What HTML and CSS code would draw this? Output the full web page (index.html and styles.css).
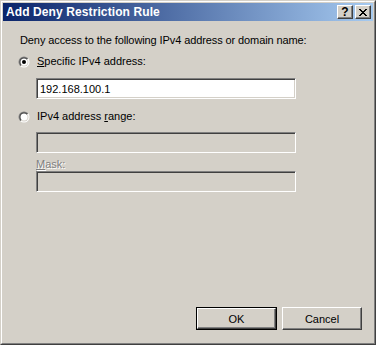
FILE: index.html
```html
<!DOCTYPE html>
<html lang="en">
  <head>
    <meta charset="UTF-8" />
    <title>Add Deny Restriction Rule</title>
    <link rel="stylesheet" href="styles.css">
  </head>
  <body>
    <div class="window">
      <div class="frame">
        <div class="titlebar">
          <span class="title">Add Deny Restriction Rule</span>
          <div class="capbtns">
            <button class="capbtn help">?</button>
            <button class="capbtn close">
              <svg width="8" height="7" viewBox="0 0 8 7">
                <path d="M0 0h2v1h1v1h2v-1h1v-1h2v1h-1v1h-1v1h-1v1h1v1h1v1h1v1h-2v-1h-1v-1h-2v1h-1v1h-2v-1h1v-1h1v-1h1v-1h-1v-1h-1v-1h-1z" fill="#000"/>
              </svg>
            </button>
          </div>
        </div>

        <div class="content">
          <div class="desc">Deny access to the following IPv4 address or domain name:</div>

          <!-- specific address -->
          <div class="radio-row first">
            <svg class="radio" width="12" height="12" viewBox="0 0 12 12">
              <defs>
                <linearGradient id="outer" x1="0" y1="0" x2="1" y2="1">
                  <stop offset="0.5" stop-color="#808080"/>
                  <stop offset="0.5" stop-color="#ffffff"/>
                </linearGradient>
                <linearGradient id="inner" x1="0" y1="0" x2="1" y2="1">
                  <stop offset="0.5" stop-color="#404040"/>
                  <stop offset="0.5" stop-color="#d4d0c8"/>
                </linearGradient>
              </defs>
              <circle cx="6" cy="6" r="5.5" fill="url(#outer)"/>
              <circle cx="6" cy="6" r="4.5" fill="url(#inner)"/>
              <circle cx="6" cy="6" r="3.5" fill="#fff"/>
              <circle cx="6" cy="6" r="2" fill="#000"/>
            </svg>
            <span class="label"><u>S</u>pecific IPv4 address:</span>
          </div>
          <div class="field first-field">
            <input class="textbox" type="text" value="192.168.100.1" />
          </div>

          <!-- range -->
          <div class="radio-row second">
            <svg class="radio" width="12" height="12" viewBox="0 0 12 12">
              <circle cx="6" cy="6" r="5.5" fill="url(#outer)"/>
              <circle cx="6" cy="6" r="4.5" fill="url(#inner)"/>
              <circle cx="6" cy="6" r="3.5" fill="#fff"/>
            </svg>
            <span class="label">IPv4 address <u>r</u>ange:</span>
          </div>
          <div class="field range-field">
            <input class="textbox disabled" type="text" disabled />
          </div>
          <div class="mask-label"><u>M</u>ask:</div>
          <div class="field mask-field">
            <input class="textbox disabled" type="text" disabled />
          </div>
        </div>

        <div class="buttons">
          <div class="default-ring"><button class="btn">OK</button></div>
          <button class="btn">Cancel</button>
        </div>
      </div>
    </div>
  </body>
</html>
```

FILE: styles.css
```css
body {
  margin: 0;
  background: #d4d0c8;
  font-family: "Liberation Sans", Arial, sans-serif;
  font-size: 11px;
}

.window {
  width: 376px;
  height: 345px;
  box-sizing: border-box;
  border: 1px solid;
  border-color: #d4d0c8 #404040 #404040 #d4d0c8;
  background: #d4d0c8;
}

.frame {
  height: 100%;
  box-sizing: border-box;
  border: 1px solid;
  border-color: #ffffff #808080 #808080 #ffffff;
  padding: 1px;
  display: flex;
  flex-direction: column;
}

.titlebar {
  height: 18px;
  display: flex;
  align-items: center;
  justify-content: space-between;
  background: linear-gradient(to right, #0a246a, #a6caf0);
}

.title {
  color: #fff;
  font-weight: bold;
  font-size: 12px;
  padding-left: 3px;
  letter-spacing: 0.1px;
}

.capbtns {
  display: flex;
  gap: 2px;
  padding-right: 2px;
}

.capbtn {
  width: 16px;
  height: 14px;
  padding: 0;
  margin: 0;
  background: #d4d0c8;
  border: 1px solid;
  border-color: #ffffff #404040 #404040 #ffffff;
  box-shadow: inset -1px -1px 0 #808080;
  display: flex;
  align-items: center;
  justify-content: center;
  font-family: "Liberation Sans", Arial, sans-serif;
  font-weight: bold;
  font-size: 12px;
  line-height: 12px;
  color: #000;
}

.close svg {
  display: block;
  margin-left: -1px;
}

.content {
  flex: 1;
  padding-left: 15px;
}

.desc {
  margin-top: 13px;
  padding-left: 2px;
  line-height: 13px;
  letter-spacing: -0.1px;
}

.radio-row {
  display: flex;
  align-items: center;
  height: 13px;
}

.radio-row.first {
  margin-top: 8px;
}

.radio-row.second {
  margin-top: 11px;
}

.radio {
  display: block;
  flex: none;
}

.label {
  margin-left: 7px;
  line-height: 13px;
}

.field {
  padding-left: 18px;
}

.first-field {
  margin-top: 10px;
}

.range-field {
  margin-top: 9px;
}

.textbox {
  display: block;
  width: 260px;
  height: 21px;
  box-sizing: border-box;
  margin: 0;
  padding: 1px 3px 0;
  border: 1px solid;
  border-color: #808080 #ffffff #ffffff #808080;
  box-shadow: inset 1px 1px 0 #404040, inset -1px -1px 0 #d4d0c8;
  background: #fff;
  font-family: "Liberation Sans", Arial, sans-serif;
  font-size: 11px;
  color: #000;
  outline: none;
}

.textbox.disabled {
  background: #d4d0c8;
}

.mask-label {
  margin-top: 5px;
  padding-left: 18px;
  line-height: 13px;
  color: #808080;
  text-shadow: 1px 1px 0 #ffffff;
}

.buttons {
  display: flex;
  justify-content: flex-end;
  gap: 5px;
  padding-right: 11px;
  margin-bottom: 12px;
}

.default-ring {
  border: 1px solid #000;
  display: flex;
}

.btn {
  width: 80px;
  height: 23px;
  margin: 0;
  padding: 0;
  background: #d4d0c8;
  border: 1px solid;
  border-color: #ffffff #404040 #404040 #ffffff;
  box-shadow: inset -1px -1px 0 #808080;
  font-family: "Liberation Sans", Arial, sans-serif;
  font-size: 11px;
  color: #000;
}

.default-ring .btn {
  width: 79px;
  height: 21px;
}
```
